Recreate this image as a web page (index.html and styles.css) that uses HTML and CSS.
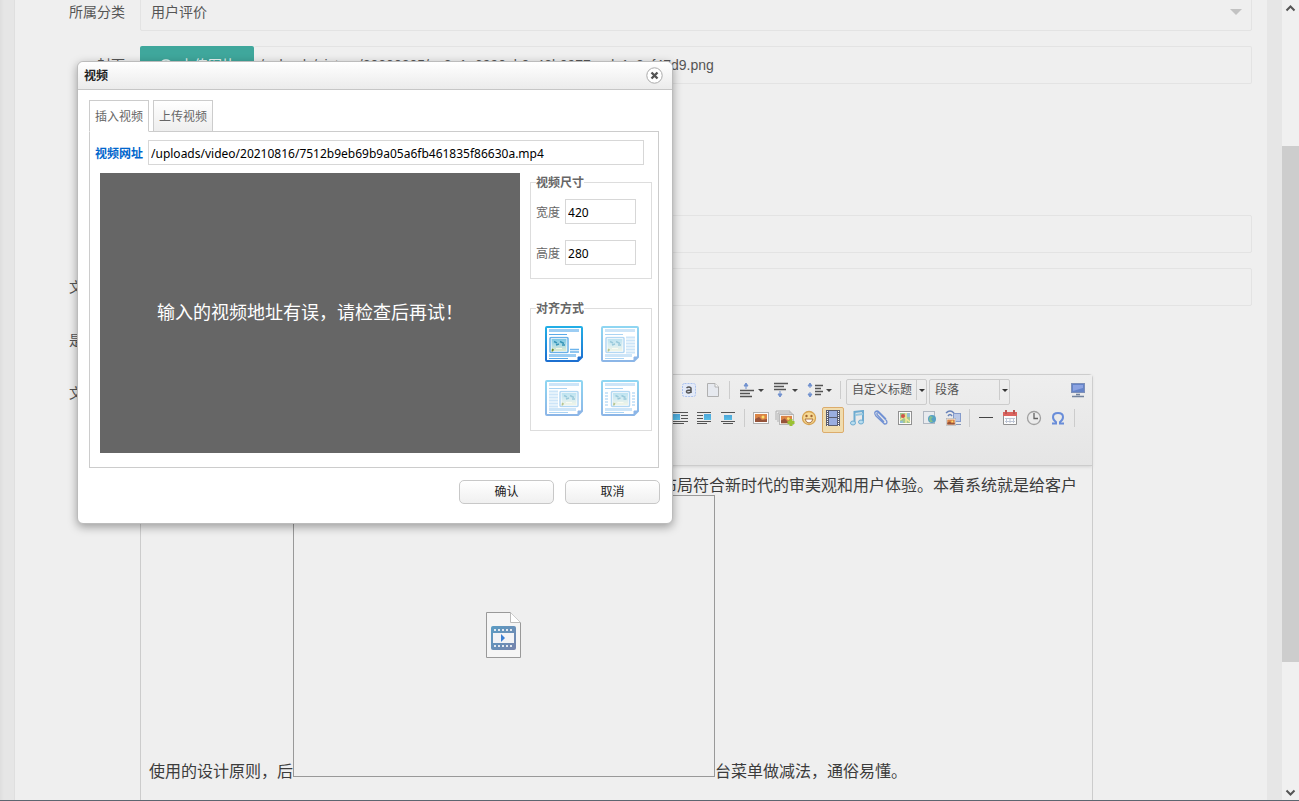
FILE: index.html
```html
<!DOCTYPE html>
<html lang="zh-CN">
<head>
<meta charset="utf-8">
<title>视频</title>
<link rel="stylesheet" href="styles.css">
</head>
<body>
<svg class="defs" aria-hidden="true">
  <defs>
    <linearGradient id="frame" x1="0" y1="0" x2="0" y2="1"><stop offset="0" stop-color="#22aee6"/><stop offset="1" stop-color="#1c6fd0"/></linearGradient>
    <linearGradient id="sky" x1="0" y1="0" x2="0" y2="1"><stop offset="0" stop-color="#7cc8e4"/><stop offset=".55" stop-color="#b4dde4"/><stop offset="1" stop-color="#e2eccf"/></linearGradient>
    <linearGradient id="film" x1="0" y1="0" x2="1" y2="1"><stop offset="0" stop-color="#5b9cc4"/><stop offset="1" stop-color="#7684ad"/></linearGradient>
    <linearGradient id="blue" x1="0" y1="0" x2="0" y2="1"><stop offset="0" stop-color="#3f9fd8"/><stop offset="1" stop-color="#45b9e6"/></linearGradient>
    <symbol id="sheet" viewBox="0 0 38 36">
      <path d="M2 1H36Q37 1 37 2V31L33 35H2Q1 35 1 34V2Q1 1 2 1Z" fill="#fff" stroke="url(#frame)" stroke-width="2"/>
      <path d="M33 35V31H37Z" fill="#1c6fd0" stroke="#1c6fd0"/>
      <path d="M4 4.500H34M4 29.500H31" stroke="#9ccdf3" stroke-width="3"/><path d="M4 8.500H22M4 32.500H23" stroke="#5aaae8" stroke-width="1"/>
    </symbol>
    <symbol id="photo" viewBox="0 0 20 17">
      <rect x="1" y="1" width="18" height="15" rx="1" fill="#fff" stroke="#6ab2e8" stroke-width="1.500"/>
      <rect x="2.500" y="2.500" width="15" height="12" fill="url(#sky)"/>
      <path d="M5 5L8 6.500M11 5L15 7M7 8.500L10 7.500M13 8.500H16" stroke="#3795b8" stroke-width="1.500" fill="none"/><path d="M3 12L5 13 4 15H2.500Z" fill="#6d8a25"/><path d="M7 12H13" stroke="#f6f8e6"/>
    </symbol>
    <symbol id="sunset" viewBox="0 0 16 12">
      <rect x=".5" y=".5" width="15" height="11" fill="#fff" stroke="#aaa"/><rect x="2" y="2" width="12" height="8" fill="#d97a35"/><path d="M2 7L6 5 9 8 14 7V10H2Z" fill="#8d4328"/><circle cx="10" cy="5" r="1.500" fill="#ffe15c"/>
    </symbol>
  </defs>
</svg>
<div class="page">
  <main class="panel">
    <form class="form">
      <div class="row">
        <label class="label" for="cat">所属分类</label>
        <div class="pick"><select id="cat" class="field"><option>用户评价</option></select><svg class="pick-arrow" width="12" height="6" viewBox="0 0 12 6"><path d="M0 0H12L6 6Z" fill="#c2c2c2"/></svg></div>
      </div>
      <div class="row row-cover">
        <label class="label" for="cover">封面</label>
        <button type="button" class="upload"><svg width="16" height="16" viewBox="0 0 16 16"><path d="M4 13H3A3 3 0 0 1 3 7A5 4 0 0 1 13 7A3 3 0 0 1 13 13H12M8 14V8M5 10L8 7 11 10" fill="none" stroke="#e9f3f2" stroke-width="1.500"/></svg>上传图片</button>
        <input id="cover" class="field cover" value="/uploads/picture/20200805/ec2e1e6990eb0c48b0977eadc1c2ef47d9.png">
      </div>
      <div class="row"><span class="label"></span><input class="field" aria-label="标题"></div>
      <div class="row"><label class="label" for="desc">文章描述</label><input id="desc" class="field"></div>
      <div class="row"><span class="label">是否显示</span></div>
      <div class="row row-editor">
        <span class="label">文章内容</span>
        <section class="editor">
          <div class="toolbar">
            <div class="tools">
              <button type="button" class="tool" aria-label="自动排版"><svg width="16" height="16" viewBox="0 0 16 16"><rect x="1.500" y="1.500" width="13" height="13" rx="2" fill="#e3eafa" stroke="#a3bdf0" stroke-dasharray="2 1"/><path d="M5.500 6Q8 4 10 6V11M10 8Q5 8 5.500 10Q6.500 12 10 10" fill="none" stroke="#444" stroke-width="1.500"/></svg></button>
              <button type="button" class="tool" aria-label="清空文档"><svg width="16" height="16" viewBox="0 0 16 16"><path d="M2.500 1.500H10L13.500 5V14.500H2.500Z" fill="#e6e9f0" stroke="#aaa"/><path d="M10 1.500V5H13.500" fill="#fff" stroke="#aaa"/></svg></button>
              <i class="sep"></i>
              <button type="button" class="tool wide" aria-label="段前距"><svg width="16" height="16" viewBox="0 0 16 16"><path d="M1 8.500H15M1 11.500H11M1 14.500H13" stroke="#444" stroke-width="1.500"/><path d="M7 7V2M5 4L7 1 9 4Z" stroke="#6488cc" fill="#6488cc"/></svg><svg width="6" height="4" viewBox="0 0 6 4"><path d="M0 0H6L3 3Z" fill="#333"/></svg></button>
              <button type="button" class="tool wide" aria-label="段后距"><svg width="16" height="16" viewBox="0 0 16 16"><path d="M1 1.500H15M1 4.500H11M1 7.500H13" stroke="#444" stroke-width="1.500"/><path d="M7 9V14M5 12L7 15 9 12Z" stroke="#6488cc" fill="#6488cc"/></svg><svg width="6" height="4" viewBox="0 0 6 4"><path d="M0 0H6L3 3Z" fill="#333"/></svg></button>
              <button type="button" class="tool wide" aria-label="行间距"><svg width="16" height="16" viewBox="0 0 16 16"><path d="M8 3.500H16M8 6.500H14M8 9.500H16M8 12.500H14" stroke="#444" stroke-width="1.500"/><path d="M3 2V6M3 10V14M1 4L3 1 5 4ZM1 12L3 15 5 12Z" stroke="#6488cc" fill="#6488cc"/></svg><svg width="6" height="4" viewBox="0 0 6 4"><path d="M0 0H6L3 3Z" fill="#333"/></svg></button>
              <i class="sep"></i>
              <button type="button" class="combo"><span>自定义标题</span><i><svg width="6" height="4" viewBox="0 0 6 4"><path d="M0 0H6L3 3Z" fill="#333"/></svg></i></button>
              <button type="button" class="combo"><span>段落</span><i><svg width="6" height="4" viewBox="0 0 6 4"><path d="M0 0H6L3 3Z" fill="#333"/></svg></i></button>
              <button type="button" class="tool screen" aria-label="全屏"><svg width="16" height="16" viewBox="0 0 16 16"><rect x="1.500" y="1.500" width="13" height="9" fill="#5779c4" stroke="#7387b4"/><path d="M3 3H13V6L3 9Z" fill="#829be0"/><path d="M6 12.500H10M2 14.500H14" stroke="#667895" stroke-width="1.500"/></svg></button>
            </div>
            <div class="tools">
              <button type="button" class="tool" aria-label="左浮动"><svg width="16" height="16" viewBox="0 0 16 16"><path d="M0 2.500H16M9 5.500H16M9 8.500H16M0 11.500H16M0 13.500H12" stroke="#444"/><rect x="1" y="4" width="7" height="6" fill="url(#blue)"/></svg></button>
              <button type="button" class="tool" aria-label="右浮动"><svg width="16" height="16" viewBox="0 0 16 16"><path d="M1 2.500H15M1 5.500H7M1 8.500H7M1 11.500H15M1 13.500H11" stroke="#444"/><rect x="8" y="4" width="7" height="6" fill="url(#blue)"/></svg></button>
              <button type="button" class="tool" aria-label="居中"><svg width="16" height="16" viewBox="0 0 16 16"><path d="M1 2.500H15M1 11.500H15M3 13.500H13" stroke="#444"/><rect x="4" y="5" width="8" height="5" fill="url(#blue)"/></svg></button>
              <i class="sep"></i>
              <button type="button" class="tool" aria-label="图片"><svg width="16" height="16" viewBox="0 0 16 16"><use href="#sunset" y="2" width="16" height="12"/></svg></button>
              <button type="button" class="tool" aria-label="多图上传"><svg width="20" height="16" viewBox="0 0 20 16"><path d="M1 10V1H15V3M3 12V3H17V5" fill="none" stroke="#aaa"/><use href="#sunset" x="4" y="4" width="15" height="11"/><path d="M16 9V16M12.500 12.500H19.500" stroke="#93bd20" stroke-width="3"/></svg></button>
              <button type="button" class="tool" aria-label="表情"><svg width="16" height="16" viewBox="0 0 16 16"><circle cx="8" cy="8" r="6.500" fill="#f8d88c" stroke="#d49b40" stroke-width="1.300"/><circle cx="5.500" cy="6" r="1.200" fill="#9a571f"/><circle cx="10.500" cy="6" r="1.200" fill="#9a571f"/><path d="M4 9H12Q11 13 8 13Q5 13 4 9Z" fill="#fff" stroke="#a8682c"/></svg></button>
              <button type="button" class="tool on" aria-label="视频"><svg width="16" height="16" viewBox="0 0 16 16"><path d="M1 0H15V16H1Z" fill="#4a506a"/><path d="M4 1H12V7H4ZM4 8H12V15H4Z" fill="#90a8e6"/><path d="M2.500 1V16M13.500 1V16" stroke="#fff" stroke-dasharray="1 1"/></svg></button>
              <button type="button" class="tool" aria-label="音乐"><svg width="16" height="16" viewBox="0 0 16 16"><path d="M5.500 12V2L14 1V11" fill="none" stroke="#62a5ce" stroke-width="2"/><path d="M6 5L14 4" stroke="#8fc5e0" stroke-width="2"/><ellipse cx="4" cy="13" rx="2.500" ry="2" fill="#b3dcf0" stroke="#62a5ce"/><ellipse cx="12" cy="12" rx="2.500" ry="2" fill="#b3dcf0" stroke="#62a5ce"/></svg></button>
              <button type="button" class="tool" aria-label="附件"><svg width="16" height="16" viewBox="0 0 16 16"><path d="M11 12L4 4.500Q3.500 2 6 3L13.500 10.500Q15 14 11.500 14L3 6Q0 2 4 1Q5 1 6 2L13 9" fill="none" stroke="#6689d2" stroke-width="1.300"/></svg></button>
              <button type="button" class="tool" aria-label="地图"><svg width="16" height="16" viewBox="0 0 16 16"><rect x="1.500" y="1.500" width="13" height="13" fill="#fff" stroke="#888"/><rect x="3" y="3" width="10" height="10" fill="#9bc58a"/><path d="M3 10L7 7 13 12M9 3V13" stroke="#f4e791" stroke-width="1.500" fill="none"/><path d="M10 3H13V7H10ZM3 11H6V13H3Z" fill="#8bbbd2"/><circle cx="6" cy="6" r="2" fill="#d04438"/></svg></button>
              <button type="button" class="tool" aria-label="网页应用"><svg width="16" height="16" viewBox="0 0 16 16"><rect x="2.500" y="1.500" width="11" height="12" fill="#e8ebef" stroke="#aab2bd"/><circle cx="11" cy="9" r="4" fill="#4798c0"/><path d="M9 6L12 7 10 9 12 12 9 12 8 9Z" fill="#7abb83"/></svg></button>
              <button type="button" class="tool" aria-label="远程图片"><svg width="16" height="16" viewBox="0 0 16 16"><path d="M1 3Q5-1 9 3M3 6Q5 3 7 6" fill="none" stroke="#5b78b5" stroke-width="1.500"/><rect x="8.500" y="3.500" width="7" height="8" fill="#b4c4e6" stroke="#7b93c8"/><path d="M10 14.500H16" stroke="#7b8db0"/><use href="#sunset" x="1" y="8" width="10" height="8"/></svg></button>
              <i class="sep"></i>
              <button type="button" class="tool" aria-label="分隔线"><svg width="16" height="16" viewBox="0 0 16 16"><path d="M1 7.500H15" stroke="#333"/></svg></button>
              <button type="button" class="tool" aria-label="日期"><svg width="16" height="16" viewBox="0 0 16 16"><path d="M1.500 5V14.500H14.500V5" fill="#fff" stroke="#888"/><path d="M1 2H15V6H1Z" fill="#da5550"/><path d="M4 0V4M12 0V4" stroke="#b84642" stroke-width="2"/><path d="M3 8.500H13M3 11.500H13M4.500 8V13M8 8V13M11.500 8V13" stroke="#b9c2d2"/></svg></button>
              <button type="button" class="tool" aria-label="时间"><svg width="16" height="16" viewBox="0 0 16 16"><circle cx="8" cy="8" r="6.500" fill="#ececec" stroke="#999" stroke-width="1.300"/><path d="M8 3V8.500H12" fill="none" stroke="#555" stroke-width="1.300"/></svg></button>
              <button type="button" class="tool" aria-label="特殊字符"><svg width="16" height="16" viewBox="0 0 16 16"><path d="M2 13.500H6V12Q3 10 3 7Q3 3 8 3Q13 3 13 7Q13 10 10 12V13.500H14" fill="none" stroke="#5c84d8" stroke-width="2"/></svg></button>
              <i class="sep"></i>
            </div>
          </div>
          <div class="doc">
            <div class="line-end">布局符合新时代的审美观和用户体验。本着系统就是给客户</div>
            <div class="line">使用的设计原则，后<svg class="video" width="422" height="282" viewBox="0 0 422 282"><rect x=".5" y=".5" width="421" height="281" fill="none" stroke="#999"/><path d="M193.500 117.500H217.500L227.500 127.500V162.500H193.500Z" fill="#f5f5f5" stroke="#999"/><path d="M217.500 117.500V127.500H227.500" fill="#fff" stroke="#bbb"/><rect x="198" y="131" width="25" height="24" rx="2" fill="url(#film)"/><path d="M200 138H221V148H200Z" fill="#f2f3f6"/><path d="M201 135H221M201 151H221" stroke="#e2e8f0" stroke-width="2" stroke-dasharray="2 2"/><path d="M208 139V147L212 143Z" fill="#3a7fd4"/></svg>台菜单做减法，通俗易懂。</div>
          </div>
        </section>
      </div>
    </form>
  </main>
  <div class="scrollbar" aria-hidden="true">
    <svg width="17" height="17" viewBox="0 0 17 17"><path d="M4.500 10.500L8.500 6.500 12.500 10.500" fill="none" stroke="#555" stroke-width="2"/></svg>
    <div class="track"><i class="before"></i><i class="thumb"></i><i class="after"></i></div>
    <svg width="17" height="17" viewBox="0 0 17 17"><path d="M4.500 7.500L8.500 11.500 12.500 7.500" fill="none" stroke="#555" stroke-width="2"/></svg>
  </div>

  <div class="dialog" role="dialog" aria-labelledby="title">
    <header class="dialog-head"><h1 id="title">视频</h1><button type="button" class="close" aria-label="关闭"><svg width="17" height="17" viewBox="0 0 17 17"><circle cx="8.500" cy="8.500" r="7.700" fill="#fff" stroke="#aaa"/><path d="M5.500 5.500L11.500 11.500M11.500 5.500L5.500 11.500" stroke="#555" stroke-width="2.400"/></svg></button></header>
    <div class="dialog-main">
      <div class="tabs"><button type="button" class="tab current">插入视频</button><button type="button" class="tab">上传视频</button></div>
      <div class="pane">
        <div class="url"><label for="url">视频网址</label><input id="url" class="text" value="/uploads/video/20210816/7512b9eb69b9a05a6fb461835f86630a.mp4"></div>
        <div class="cols">
          <div class="preview">输入的视频地址有误，请检查后再试！</div>
          <div class="side">
            <fieldset class="box"><legend>视频尺寸</legend>
              <div class="size"><label for="w">宽度</label><input id="w" class="text" value="420"></div>
              <div class="size"><label for="h">高度</label><input id="h" class="text" value="280"></div>
            </fieldset>
            <fieldset class="box"><legend>对齐方式</legend>
              <div class="aligns">
                <button type="button" class="align on" aria-label="默认"><svg width="38" height="36" viewBox="0 0 38 36"><use href="#sheet" width="38" height="36"/><use href="#photo" x="4" y="10.500" width="20" height="17"/><path d="M25 23.500H34M25 26H34" stroke="#6cb4ec" stroke-width="1.500"/></svg></button>
                <button type="button" class="align" aria-label="左浮动"><svg width="38" height="36" viewBox="0 0 38 36"><use href="#sheet" width="38" height="36"/><use href="#photo" x="4" y="10.500" width="20" height="17"/><path d="M25 11.500H34M25 14.500H34M25 17.500H34M25 20.500H34M25 23.500H34M25 26.500H34" stroke="#9ccdf3" stroke-width="2"/></svg></button>
                <button type="button" class="align" aria-label="右浮动"><svg width="38" height="36" viewBox="0 0 38 36"><use href="#sheet" width="38" height="36"/><use href="#photo" x="14" y="10.500" width="20" height="17"/><path d="M4 11.500H13M4 14.500H13M4 17.500H13M4 20.500H13M4 23.500H13M4 26.500H13" stroke="#9ccdf3" stroke-width="2"/></svg></button>
                <button type="button" class="align" aria-label="独占一行"><svg width="38" height="36" viewBox="0 0 38 36"><use href="#sheet" width="38" height="36"/><use href="#photo" x="9" y="10.500" width="21" height="17"/><path d="M4 13H7M4 16H7M4 19H7M4 22H7M4 25H7M31 13H34M31 16H34M31 19H34M31 22H34M31 25H34" stroke="#9ccdf3" stroke-width="2"/></svg></button>
              </div>
            </fieldset>
          </div>
        </div>
      </div>
      <div class="actions"><button type="button">确认</button><button type="button">取消</button></div>
    </div>
  </div>
</div>
</body>
</html>
```
FILE: styles.css
```css
* { box-sizing: border-box; }
body { margin: 0; font: 14px/20px "Liberation Sans", "Noto Sans CJK SC", sans-serif; color: #555; background: #e6e6e6; }
button, input, select { font: inherit; color: inherit; margin: 0; }
button { padding: 0; border: 0; background: none; }
svg { display: block; flex: none; }
i { font-style: normal; }
.defs { position: absolute; width: 0; height: 0; }
.page { position: relative; display: flex; height: 100vh; overflow: hidden; border-bottom: 1px solid #5c6670; background: linear-gradient(90deg, #dedede, #e6e6e6 4px); }
.panel { flex: 1; min-width: 0; margin: 0 15px 0 14px; border-left: 1px solid #dfdfdf; background: #efefef; }
.form { margin-top: -7px; padding-right: 15px; }
.row { display: flex; min-height: 38px; margin-bottom: 15px; }
.row-cover { margin-bottom: 131px; }
.label { width: 125px; flex: none; padding: 9px 15px 9px 0; text-align: right; }
.field { flex: 1; min-width: 0; width: 100%; height: 38px; padding: 0 10px; border: 1px solid #e3e3e3; border-radius: 2px; background: transparent; outline: 0; }
.pick { position: relative; flex: 1; }
.pick select { appearance: none; }
.pick-arrow { position: absolute; right: 10px; top: 16px; }
.upload { display: flex; align-items: center; justify-content: center; gap: 6px; width: 114px; height: 38px; border-radius: 2px; background: #3fa79c; color: #e9f3f2; }
.cover { padding: 0 6px; border-left: 0; }
.row-editor { margin: 0; }
.editor { flex: 0 1 953px; min-height: 460px; border: 1px solid #ccc; border-radius: 4px 4px 0 0; }
.toolbar { height: 91px; padding: 4px 13px 0 0; border-bottom: 1px solid #ccc; background: linear-gradient(#eee, #e5e5e5); box-shadow: 0 1px 3px #d2d2d2; }
.tools { display: flex; justify-content: flex-end; height: 28px; }
.tool { display: flex; justify-content: center; width: 22px; height: 26px; margin: 0 1px; padding-top: 2px; border: 1px solid transparent; border-radius: 2px; }
.tool svg { opacity: .9; }
.tool.wide { width: 32px; align-items: flex-start; gap: 3px; }
.tool.wide svg + svg { margin-top: 7px; }
.tool.on { border-color: #dcac6c; background: #f0dcae; }
.sep { width: 1px; height: 18px; margin: 2px 4px; background: #ccc; }
.combo { display: flex; width: 81px; height: 26px; margin: 0 1px; border: 1px solid #ccc; border-radius: 2px; font-size: 12px; line-height: 20px; }
.combo span { flex: 1; padding-left: 5px; text-align: left; }
.combo i { width: 10px; height: 20px; padding: 9px 2px; border-left: 1px solid #ccc; }
.screen { margin-left: 56px; margin-right: -10px; }
.doc { padding: 10px 8px; color: #3c3c3c; font-size: 16px; line-height: 20px; white-space: nowrap; }
.line-end { margin-bottom: -1px; padding-right: 7px; text-align: right; }
.video { display: inline-block; vertical-align: baseline; }
.scrollbar { display: flex; flex-direction: column; width: 17px; background: #f0f0f0; }
.track { flex: 1; display: flex; flex-direction: column; }
.before { flex: 129; }
.thumb { flex: 516; background: #cdcdcd; }
.after { flex: 121; }

.dialog { position: absolute; left: 77px; top: 61px; width: 596px; border: 1px solid #bcbcbc; border-radius: 6px; background: #fff; box-shadow: 0 3px 10px rgba(0, 0, 0, .35); font-size: 12px; line-height: 16px; color: #666; }
.dialog-head { display: flex; align-items: center; justify-content: space-between; height: 28px; padding: 0 9px 0 6px; border-bottom: 1px solid #c6c6c6; border-radius: 6px 6px 0 0; background: linear-gradient(#fff, #ebebeb); }
.dialog-head h1 { margin: 0; font-size: 12px; line-height: 16px; color: #222; }
.dialog-main { padding: 10px 12px 19px 11px; }
.tabs { position: relative; z-index: 1; display: flex; gap: 4px; }
.tab { height: 32px; padding: 2px 5px 0; border: 1px solid #ccc; background: linear-gradient(#fff, #eee); }
.tab.current { background: #fff; border-bottom-color: #fff; }
.pane { margin: -1px 1px 0 0; padding: 8px 6px 14px 5px; border: 1px solid #ccc; }
.url { display: flex; align-items: center; gap: 5px; margin-right: 8px; color: #0066cc; font-weight: bold; }
.url label, .size label { padding-top: 2px; }
.text { height: 25px; min-width: 0; padding: 2px 2px 0; border: 1px solid #d7d7d7; background: #fff; color: #000; font: 12px/16px "Noto Sans", sans-serif; outline: 0; }
.url .text { flex: 1; }
.cols { display: flex; gap: 10px; margin: 8px 0 0 5px; }
.preview { flex: 1; display: flex; align-items: center; justify-content: center; height: 280px; background: #666; color: #fff; font-size: 18px; line-height: 24px; }
.side { width: 122px; }
.box { margin: 0; padding: 0 5px; border: 1px solid #ddd; min-width: 0; height: 106px; }
.box + .box { margin-top: 20px; height: 132px; }
.box legend { padding: 1px 0 0; font-weight: bold; line-height: 18px; }
.size { display: flex; align-items: center; gap: 5px; margin: 7px 0 16px; }
.size .text { width: 71px; }
.aligns { display: grid; grid-template-columns: 38px 38px; gap: 18px; padding: 8px 9px; }
.align { opacity: .5; }
.align.on { opacity: 1; }
.actions { display: flex; justify-content: flex-end; gap: 11px; padding-top: 12px; }
.actions button { width: 95px; height: 24px; border: 1px solid #c8c8c8; border-radius: 5px; background: linear-gradient(#fff, #f0f0f0); color: #222; }
```
